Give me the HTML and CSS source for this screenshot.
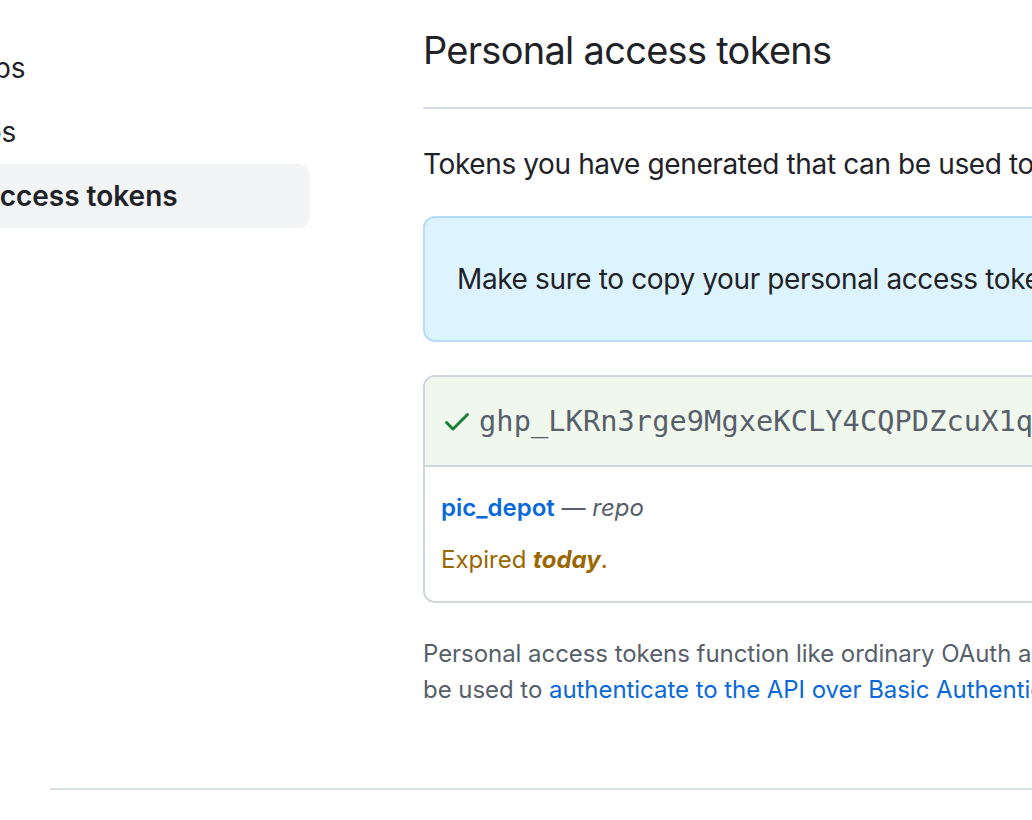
FILE: index.html
```html
<!DOCTYPE html>
<html lang="en">
<head>
<meta charset="utf-8">
<title>Personal access tokens</title>
<link rel="stylesheet" href="styles.css">
</head>
<body>
<div class="page">
  <div class="layout">
    <nav class="sidebar">
      <ul class="nav-list">
        <li class="nav-item">GitHub Apps</li>
        <li class="nav-item">OAuth Apps</li>
        <li class="nav-item active">Personal access tokens</li>
      </ul>
    </nav>
    <main class="main">
      <div class="subhead">
        <h2 class="subhead-heading">Personal access tokens</h2>
      </div>
      <p class="lead">Tokens you have generated that can be used to access the GitHub API.</p>
      <div class="flash">Make sure to copy your personal access token now. You won’t be able to see it again!</div>
      <div class="box">
        <div class="box-header">
          <svg class="check" viewBox="0 0 16 16" width="32" height="32" aria-hidden="true"><path fill="#1a7f37" d="M13.78 4.22a.75.75 0 0 1 0 1.06l-7.25 7.25a.75.75 0 0 1-1.06 0L2.22 9.28a.751.751 0 0 1 .018-1.042.751.751 0 0 1 1.042-.018L6 10.94l6.72-6.72a.75.75 0 0 1 1.06 0Z"/></svg>
          <code class="token">ghp_LKRn3rge9MgxeKCLY4CQPDZcuX1qW8a2Hf0T</code>
        </div>
        <div class="box-row">
          <div class="token-name"><a class="token-link" href="#">pic_depot</a> <span class="scope">— <em>repo</em></span></div>
          <div class="expiry">Expired <strong><em>today</em></strong>.</div>
        </div>
      </div>
      <p class="note">Personal access tokens function like ordinary OAuth access tokens. They can be used instead of a password for Git over HTTPS, or can<br>be used to <a class="link" href="#">authenticate to the API over Basic Authentication</a>.</p>
    </main>
  </div>
  <footer class="footer"></footer>
</div>
</body>
</html>
```
FILE: styles.css
```css
html, body {
  margin: 0;
  padding: 0;
  background: #ffffff;
}
body {
  font-family: Inter, "Liberation Sans", sans-serif;
  color: #1f2328;
  overflow: hidden;
  width: 1032px;
  height: 820px;
}
.page {
  width: 1032px;
}
.layout {
  display: flex;
  align-items: flex-start;
  gap: 113px;
  padding-top: 36px;
  white-space: nowrap;
}
.sidebar {
  flex: 0 0 310px;
  overflow: hidden;
}
.nav-list {
  list-style: none;
  margin: 0 0 0 -158px;
  padding: 0;
}
.nav-item {
  height: 64px;
  line-height: 64px;
  font-size: 28px;
  padding-left: 16px;
  border-radius: 12px;
  color: #1f2328;
}
.nav-item.active {
  background: #f3f4f6;
  font-weight: 600;
}
.main {
  flex: 0 0 auto;
  margin-top: -16px;
}
.subhead {
  border-bottom: 2px solid #d8dee4;
  padding-bottom: 27px;
  margin-bottom: 34px;
}
.subhead-heading {
  margin: 0;
  font-size: 38px;
  letter-spacing: -0.72px;
  line-height: 60px;
  font-weight: 400;
}
.lead {
  margin: 0 0 31px;
  font-size: 28px;
  letter-spacing: -0.38px;
  line-height: 42px;
}
.flash {
  border: 2px solid #b6dcfb;
  background: #ddf4ff;
  border-radius: 12px;
  padding: 40px 32px;
  font-size: 28px;
  letter-spacing: -0.38px;
  line-height: 42px;
  margin-bottom: 33px;
}
.box {
  border: 2px solid #d0d7de;
  border-radius: 12px;
}
.box-header {
  display: flex;
  align-items: center;
  gap: 6px;
  background: #f0f7ed;
  border-radius: 10px 10px 0 0;
  padding: 22px 16px;
  height: 44px;
  border-bottom: 2px solid #d0d7de;
}
.check {
  flex: none;
}
.token {
  font-family: "DejaVu Sans Mono", "Liberation Mono", monospace;
  font-size: 28.6px;
  letter-spacing: 0.1px;
  color: #57606a;
}
.box-row {
  padding: 20px 16px;
  font-size: 24px;
  line-height: 42px;
  display: flex;
  flex-direction: column;
  gap: 10px;
}
.token-link {
  color: #0969da;
  font-weight: 600;
  text-decoration: none;
}
.scope {
  color: #57606a;
}
.expiry {
  color: #9a6700;
}
.note {
  margin: 33px 0 0;
  font-size: 24px;
  letter-spacing: -0.05px;
  line-height: 36px;
  color: #57606a;
}
.link {
  color: #0969da;
  text-decoration: none;
}
.footer {
  margin: 80px 0 0 50px;
  border-top: 2px solid #d8dee4;
}
```
